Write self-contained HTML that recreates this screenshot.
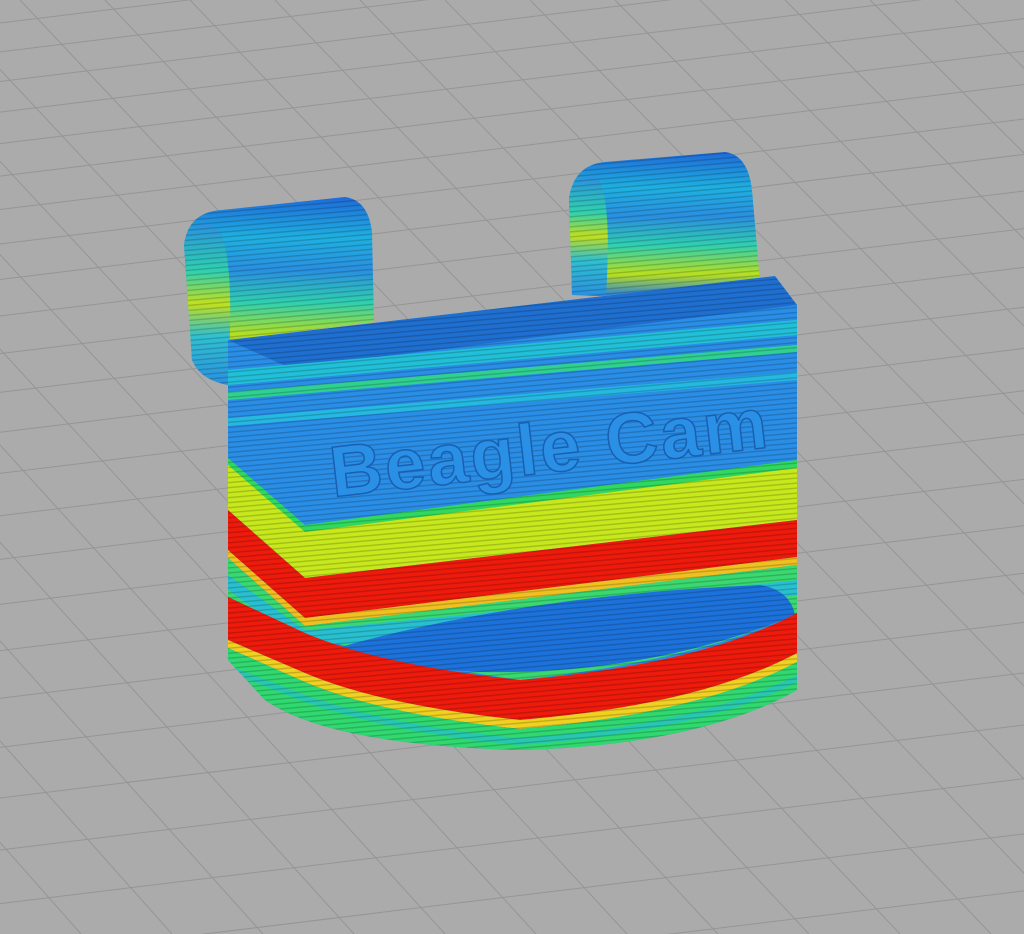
<!DOCTYPE html>
<html><head><meta charset="utf-8"><style>
html,body{margin:0;padding:0;background:#ababab;width:1024px;height:934px;overflow:hidden;}
svg{display:block;overflow:hidden}
</style></head><body>
<svg id="s" width="1024" height="934" viewBox="0 0 1024 934" xmlns="http://www.w3.org/2000/svg">
<defs>
<pattern id="str" width="8" height="5" patternUnits="userSpaceOnUse" patternTransform="rotate(-5)">
<rect width="8" height="1.4" fill="#000" opacity="0.18"/>
</pattern>
<clipPath id="body">
<path d="M228,340 L775,276 L797,305 L797,690 Q700,745 520,750 Q330,745 265,700 L228,660 Z"/>
</clipPath>
<clipPath id="hkc">
<path d="M192,360 L184,245 Q188,212 222,210 L345,197 Q368,200 372,232 L374,322 L230,340 L228,385 Q200,380 192,360Z"/>
<path d="M572,295 L569,198 Q574,165 605,162 L725,152 Q748,155 752,190 L760,282 L600,296 Z"/>
</clipPath>
<linearGradient id="hk" x1="0" y1="0" x2="0" y2="1">
<stop offset="0" stop-color="#1f6ad8"/><stop offset="0.25" stop-color="#1fb0e0"/><stop offset="0.45" stop-color="#2a8fe0"/><stop offset="0.65" stop-color="#30d0b0"/><stop offset="0.85" stop-color="#b8e020"/><stop offset="1" stop-color="#2a80e0"/>
</linearGradient>
<linearGradient id="hk2" x1="0" y1="0" x2="0" y2="1">
<stop offset="0" stop-color="#2a90e0"/><stop offset="0.3" stop-color="#30d0b0"/><stop offset="0.5" stop-color="#c0e020"/><stop offset="0.7" stop-color="#30c0d0"/><stop offset="1" stop-color="#2a90e0"/>
</linearGradient>
</defs>
<rect width="1024" height="934" fill="#ababab"/>
<g id="grid" stroke="#959595" stroke-width="1" fill="none"></g>

<path d="M192,360 L184,245 Q188,212 222,210 L345,197 Q368,200 372,232 L374,322 L230,340 Z" fill="url(#hk)"/>
<path d="M192,360 L184,245 Q188,215 215,225 Q232,240 230,330 L228,385 Q200,380 192,360Z" fill="url(#hk2)"/>
<path d="M572,295 L569,198 Q574,165 605,162 L725,152 Q748,155 752,190 L760,282 L600,296 Z" fill="url(#hk)"/>
<path d="M572,295 L569,198 Q575,170 598,178 Q612,200 606,296 Z" fill="url(#hk2)"/>
<rect x="180" y="150" width="600" height="250" fill="url(#str)" clip-path="url(#hkc)"/>

<g clip-path="url(#body)">
<rect x="200" y="260" width="620" height="500" fill="#2a8ee6"/>
<path d="M228,340 L775,276 L797,305 L290,368 Z" fill="#1f6fd0"/>
<path d="M228,370 L797,320 L797,335 L228,385Z" fill="#22c0d8"/>
<path d="M228,392 L797,345 L797,352 L228,400Z" fill="#30d090"/>
<path d="M228,418 L797,372 L797,380 L228,426Z" fill="#25b8e0"/>
<path d="M228,463 L305,530 L797,467 L797,520 L305,578 L228,510Z" fill="#c6e81c"/>
<path d="M228,458 L305,525 L797,460 L797,468 L305,532 L228,465Z" fill="#30d860"/>
<path d="M228,510 L305,578 L797,520 L797,557 L305,618 L228,550Z" fill="#ee1a0c"/>
<path d="M228,550 L305,618 L797,557 L797,565 L305,626 L228,558Z" fill="#f0c020"/>
<path d="M228,558 L305,626 L797,565 L797,613 Q700,660 520,680 Q380,660 305,633 L228,597Z" fill="#3ad870"/>
<path d="M228,575 L305,630 Q420,620 797,580 L797,595 Q500,640 305,645 L228,590Z" fill="#28c0d0"/>
<path d="M330,650 Q520,595 760,585 Q790,590 795,615 Q650,675 480,672 Q380,668 330,650Z" fill="#1c72da"/>
<path d="M228,597 L305,633 Q380,665 520,680 Q700,665 797,613 L797,653 Q700,705 520,720 Q380,705 305,673 L228,640Z" fill="#ee1a0c"/>
<path d="M228,640 L305,673 Q380,705 520,720 Q700,705 797,653 L797,662 Q700,714 520,729 Q380,714 305,682 L228,648Z" fill="#f0d020"/>
<path d="M228,648 L305,682 Q380,714 520,729 Q700,714 797,662 L797,760 L228,760Z" fill="#30d870"/>
<path d="M228,665 L305,695 Q400,728 520,738 Q700,725 797,675 L797,682 Q700,732 520,745 Q400,735 305,702 L228,672Z" fill="#28c8b0"/>
<rect x="200" y="260" width="620" height="500" fill="url(#str)"/>
<text x="0" y="0" transform="translate(333,497) rotate(-6.5)" font-family="Liberation Sans, sans-serif" font-weight="bold" font-size="72" fill="#2a90e6" stroke="#1a5fb0" stroke-width="1.5" letter-spacing="3">Beagle Cam</text>
</g>
</svg>
<script>
var g=document.getElementById('grid'),ns='http://www.w3.org/2000/svg';
function L(a,b,c,d){var l=document.createElementNS(ns,'line');l.setAttribute('x1',a);l.setAttribute('y1',b);l.setAttribute('x2',c);l.setAttribute('y2',d);g.appendChild(l);}
var y=-5,sp=28;
while(y<1100){L(0,y,1024,y-125);y+=sp;sp*=1.03;}
for(var i=-14;i<14;i++){var xt=i*85+20;L(xt,0,xt+880+i*6,934);}
</script>
</body></html>
